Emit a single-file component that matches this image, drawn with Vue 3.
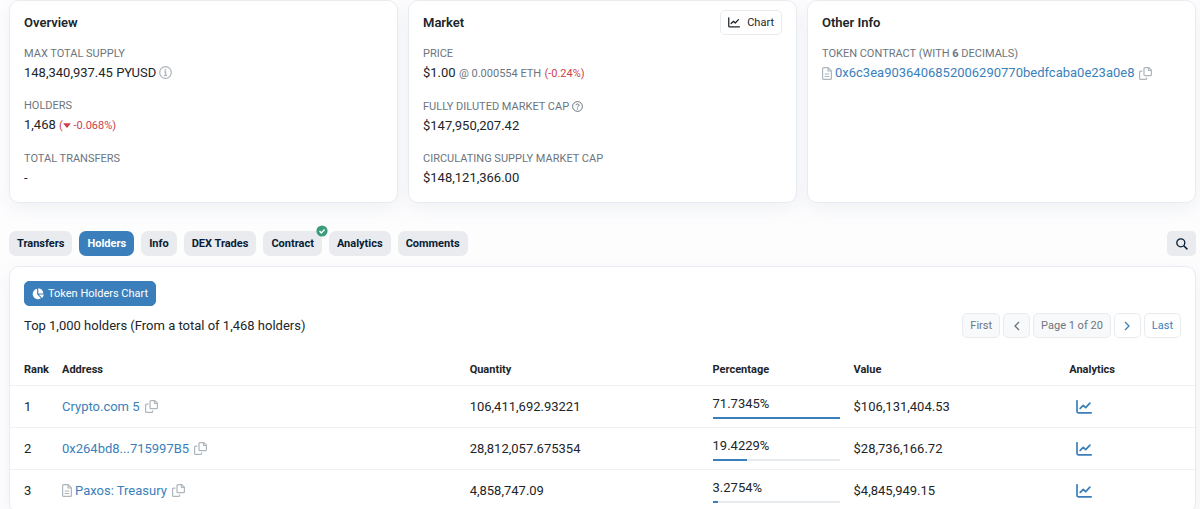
<script setup>
import { ref } from 'vue'

const tabs = [
  { label: 'Transfers' },
  { label: 'Holders' },
  { label: 'Info' },
  { label: 'DEX Trades' },
  { label: 'Contract', verified: true },
  { label: 'Analytics' },
  { label: 'Comments' },
]
const active = ref('Holders')

const holders = [
  { rank: 1, name: 'Crypto.com 5', contract: false, quantity: '106,411,692.93221', pct: '71.7345%', bar: 100, value: '$106,131,404.53' },
  { rank: 2, name: '0x264bd8...715997B5', contract: false, quantity: '28,812,057.675354', pct: '19.4229%', bar: 27, value: '$28,736,166.72' },
  { rank: 3, name: 'Paxos: Treasury', contract: true, quantity: '4,858,747.09', pct: '3.2754%', bar: 4, value: '$4,845,949.15' },
]
</script>

<template>
  <svg class="defs" aria-hidden="true">
    <symbol id="i-copy" viewBox="0 0 13 13">
      <path d="M6 .6h3.800l2.600 2.600v4.500a1 1 0 0 1-1 1H6a1 1 0 0 1-1-1V1.600a1 1 0 0 1 1-1zM9.500.8v2.700h2.700M3.400 4.200H1.600a1 1 0 0 0-1 1v6.200a1 1 0 0 0 1 1h5a1 1 0 0 0 1-1v-1" fill="none" stroke="currentColor" stroke-width="1.200" stroke-linejoin="round" />
    </symbol>
    <symbol id="i-file" viewBox="0 0 10 13">
      <path d="M1.600.6h4.600l3.200 3.200v7.600a1 1 0 0 1-1 1H1.600a1 1 0 0 1-1-1V1.600a1 1 0 0 1 1-1zM6 .8v3.200h3.200M2.700 7h4.600M2.700 9.500h4.600" fill="none" stroke="currentColor" stroke-width="1.200" stroke-linejoin="round" />
    </symbol>
    <symbol id="i-chart" viewBox="0 0 16 14">
      <path d="M1 .8v10.700a1.300 1.300 0 0 0 1.300 1.300H15.200M4.200 8.400l3-3 2.500 2.300 4.200-4.500" fill="none" stroke="currentColor" stroke-width="1.700" stroke-linecap="round" stroke-linejoin="round" />
    </symbol>
  </svg>
  <main class="page">
    <div class="cards">
      <section class="card">
        <div class="head"><h2>Overview</h2></div>
        <dl>
          <dt>MAX TOTAL SUPPLY</dt>
          <dd>
            148,340,937.45 PYUSD
            <svg class="info" viewBox="0 0 13 13"><circle cx="6.500" cy="6.500" r="5.800" fill="none" stroke="currentColor" stroke-width="1.200" /><path d="M5 5.900h1.700v3.300M4.900 9.300h3.300" fill="none" stroke="currentColor" stroke-width="1.200" /><circle cx="6.400" cy="3.800" r=".9" fill="currentColor" /></svg>
          </dd>
          <dt>HOLDERS</dt>
          <dd>
            1,468
            <span class="small red">(<svg class="caret" viewBox="0 0 8 5"><path d="M.8.300h6.400q.6 0 .3.500L4.500 4.500q-.5.400-1 0L.5.800Q.2.300.8.300z" fill="currentColor" /></svg> -0.068%)</span>
          </dd>
          <dt>TOTAL TRANSFERS</dt>
          <dd>-</dd>
        </dl>
      </section>
      <section class="card">
        <div class="head">
          <h2>Market</h2>
          <button class="btn chart-btn" type="button"><svg class="chart-sm"><use href="#i-chart" /></svg>Chart</button>
        </div>
        <dl>
          <dt>PRICE</dt>
          <dd>$1.00 <span class="small muted">@ 0.000554 ETH</span> <span class="small red">(-0.24%)</span></dd>
          <dt>
            FULLY DILUTED MARKET CAP
            <svg class="help" viewBox="0 0 11 11"><circle cx="5.500" cy="5.500" r="4.900" fill="none" stroke="currentColor" /><path d="M3.900 4.300q.1-1.300 1.600-1.300t1.600 1.200q0 .8-.9 1.200-.7.300-.7 1" fill="none" stroke="currentColor" /><circle cx="5.500" cy="7.900" r=".7" fill="currentColor" /></svg>
          </dt>
          <dd>$147,950,207.42</dd>
          <dt>CIRCULATING SUPPLY MARKET CAP</dt>
          <dd>$148,121,366.00</dd>
        </dl>
      </section>
      <section class="card">
        <div class="head"><h2>Other Info</h2></div>
        <dl>
          <dt>TOKEN CONTRACT (WITH <b>6</b> DECIMALS)</dt>
          <dd class="addr">
            <svg class="file"><use href="#i-file" /></svg>
            <a href="#contract">0x6c3ea9036406852006290770bedfcaba0e23a0e8</a>
            <button class="copy" type="button" aria-label="Copy address"><svg><use href="#i-copy" /></svg></button>
          </dd>
        </dl>
      </section>
    </div>

    <nav class="tabs">
      <button v-for="t in tabs" :key="t.label" type="button" class="tab" :class="{ active: active === t.label }" @click="active = t.label">
        {{ t.label }}
        <svg v-if="t.verified" class="badge" viewBox="0 0 12 12"><circle cx="6" cy="6" r="5.600" fill="#3b9c7c" /><path d="M3.500 6.100l1.800 1.800 3.300-3.400" fill="none" stroke="#fff" stroke-width="1.400" /></svg>
      </button>
      <button type="button" class="tab search" aria-label="Search">
        <svg viewBox="0 0 12 12"><circle cx="4.800" cy="4.800" r="4" fill="none" stroke="currentColor" stroke-width="1.300" /><path d="M7.800 7.800l3.600 3.600" stroke="currentColor" stroke-width="1.500" /></svg>
      </button>
    </nav>

    <section class="card holders">
      <div class="top">
        <button class="btn primary" type="button">
          <svg viewBox="0 0 12 12"><path d="M5.100.8v5.500l3.800 3.900A5.200 5.200 0 1 1 5.100.8zM6.300.2a5.200 5.200 0 0 1 5 5.200h-5zM6.800 6.500h5a5.200 5.200 0 0 1-1.600 3.400z" fill="currentColor" /></svg>
          Token Holders Chart
        </button>
        <div class="bar-row">
          <p>Top 1,000 holders (From a total of 1,468 holders)</p>
          <div class="pager">
            <button class="btn" type="button" disabled>First</button>
            <button class="btn arrow" type="button" disabled aria-label="Previous"><svg viewBox="0 0 6 10"><path d="M5 1L1 5l4 4" fill="none" stroke="currentColor" stroke-width="1.300" /></svg></button>
            <span class="btn off">Page 1 of 20</span>
            <button class="btn arrow" type="button" aria-label="Next"><svg viewBox="0 0 6 10"><path d="M1 1l4 4-4 4" fill="none" stroke="currentColor" stroke-width="1.300" /></svg></button>
            <button class="btn" type="button">Last</button>
          </div>
        </div>
      </div>
      <table>
        <colgroup>
          <col class="c-rank" /><col class="c-addr" /><col class="c-qty" /><col class="c-pct" /><col class="c-val" /><col />
        </colgroup>
        <thead>
          <tr><th>Rank</th><th>Address</th><th>Quantity</th><th>Percentage</th><th>Value</th><th>Analytics</th></tr>
        </thead>
        <tbody>
          <tr v-for="h in holders" :key="h.rank">
            <td>{{ h.rank }}</td>
            <td>
              <div class="addr">
                <svg v-if="h.contract" class="file"><use href="#i-file" /></svg>
                <a href="#holder">{{ h.name }}</a>
                <button class="copy" type="button" aria-label="Copy address"><svg><use href="#i-copy" /></svg></button>
              </div>
            </td>
            <td>{{ h.quantity }}</td>
            <td>
              <div class="pct">{{ h.pct }}</div>
              <div class="track"><div class="fill" :style="{ width: h.bar + '%' }"></div></div>
            </td>
            <td>{{ h.value }}</td>
            <td><a class="chart-link" href="#analytics" aria-label="Analytics"><svg><use href="#i-chart" /></svg></a></td>
          </tr>
        </tbody>
      </table>
    </section>
  </main>
</template>

<style>
body { margin: 0; background: #fdfdfe; }
</style>

<style scoped>
.defs { position: absolute; width: 0; height: 0; }
.page {
  padding: 0 4px 0 9px;
  font: 13px/20px Roboto, "Liberation Sans", sans-serif;
  color: #212529;
}
button { font: inherit; color: inherit; cursor: pointer; }
svg { display: inline-block; flex: none; }
a { color: #3a7fbb; text-decoration: none; }
.cards { display: grid; grid-template-columns: repeat(3, 1fr); gap: 10px; }
.card {
  box-sizing: border-box;
  background: #fff;
  border: 1px solid #e9ecef;
  border-radius: 10px;
  box-shadow: 0 6px 18px rgba(189, 197, 209, .2);
}
.cards .card { padding: 9px 14px 13px; }
.head { display: flex; align-items: center; justify-content: space-between; height: 25px; margin-bottom: 11px; }
h2 { margin: 0; font-size: 13px; font-weight: 600; }
dl, dd, p { margin: 0; }
dt { font-size: 11px; line-height: 16px; color: #6c757d; }
dd { line-height: 22px; }
dd + dt { margin-top: 14px; }
.small { font-size: 11px; }
.muted { color: #6c757d; }
.red { color: #cc3f4c; }
.info { width: 13px; height: 13px; color: #adb5bd; vertical-align: -2px; }
.help { width: 11px; height: 11px; vertical-align: -2px; }
.caret { width: 8px; height: 5px; vertical-align: 1px; }
.btn {
  display: inline-flex; align-items: center; justify-content: center;
  box-sizing: border-box; height: 25px; padding: 0 7px;
  border: 1px solid #e9ecef; border-radius: 5px; background: #fff;
  font-size: 11px; line-height: 16px;
}
.chart-btn { gap: 7px; }
.chart-sm { width: 12px; height: 11px; }
.addr { display: flex; align-items: center; gap: 3px; }
.file { width: 10px; height: 13px; color: #adb5bd; }
.copy { display: flex; margin-left: 2px; padding: 0; border: 0; background: none; color: #adb5bd; }
.copy svg { width: 13px; height: 13px; }
.tabs { display: flex; gap: 7px; margin: 28px 0 10px; }
.tab {
  position: relative; height: 25px; padding: 0 8px; border: 0; border-radius: 7px;
  background: #e9ebef; color: #081d35; font-size: 11px; font-weight: 700;
}
.tab.active { background: #3a7fbb; color: #fff; }
.badge { position: absolute; top: -6px; right: -6px; width: 12px; height: 12px; }
.search { display: flex; align-items: center; justify-content: center; width: 29px; margin-left: auto; border-radius: 5px; }
.search svg { width: 12px; height: 12px; }
.top { padding: 14px; }
.primary { gap: 4px; background: #3a7fbb; border-color: #3a7fbb; color: #fff; }
.primary svg { width: 12px; height: 12px; }
.bar-row { display: flex; align-items: center; justify-content: space-between; margin-top: 7px; }
.top > .btn { display: flex; }
.pager { display: flex; gap: 3px; color: #3a7fbb; }
.pager .btn:disabled, .pager .off { background: #f8f9fa; color: #6c757d; }
.pager .arrow { width: 27px; }
.arrow svg { width: 6px; height: 10px; }
table { width: 100%; table-layout: fixed; border-collapse: collapse; }
.c-rank { width: 38px; }
.c-addr { width: 34.4%; }
.c-qty { width: 20.5%; }
.c-pct { width: 11.9%; }
.c-val { width: 18.2%; }
th, td { padding: 0 0 0 14px; text-align: left; border-bottom: 1px solid #eef0f2; }
th { height: 30px; padding-top: 3px; font-size: 11px; font-weight: 700; }
td { height: 41px; }
.pct { line-height: 20px; }
.track { height: 2px; margin-top: 3px; background: #e9ecef; }
.fill { height: 2px; background: #3a7fbb; }
.chart-link { display: flex; margin-left: 7px; }
.chart-link svg { width: 16px; height: 14px; }
</style>
